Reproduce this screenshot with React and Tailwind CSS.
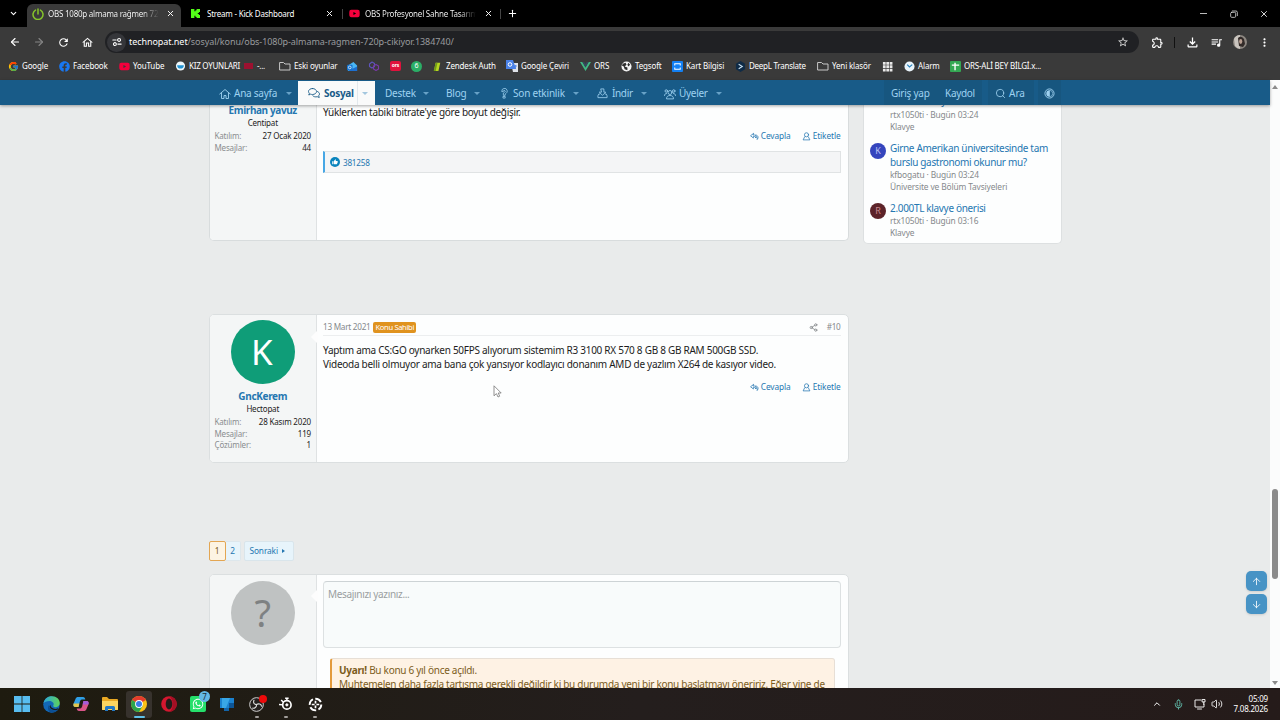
import React from "react";
import {
  ArrowDown,
  ArrowLeft,
  ArrowRight,
  ArrowUp,
  ChevronDown,
  ChevronUp,
  Mic,
  Plus,
  Search,
  Share2,
  Volume2,
  X,
} from "lucide-react";
import { FcGoogle } from "react-icons/fc";
import { FaFacebook, FaWhatsapp, FaYoutube } from "react-icons/fa";
import {
  MdMoreVert,
  MdOutlineExtension,
  MdOutlineFileDownload,
  MdOutlineHome,
  MdOutlineQueueMusic,
  MdRefresh,
  MdStarBorder,
  MdThumbUp,
} from "react-icons/md";

function Line({ children, className = "h-[11px] w-[11px]", width = 1.6, box = "0 0 24 24" }) {
  return (
    <svg
      viewBox={box}
      className={`shrink-0 ${className}`}
      fill="none"
      stroke="currentColor"
      strokeWidth={width}
      strokeLinecap="round"
      strokeLinejoin="round"
    >
      {children}
    </svg>
  );
}

function PowerIcon() {
  return (
    <Line className="h-[12px] w-[12px] text-[#86c52b]" width={3}>
      <path d="M7 4.2a10 10 0 1 0 10 0M12 2v10" />
    </Line>
  );
}

function KickIcon() {
  return (
    <svg viewBox="0 0 12 12" className="h-[9px] w-[9px] shrink-0" fill="#53fc18">
      <path d="M0 0h4.500v3H6V1.500h1.500V0H12v4h-1.500v1.300H9v1.400h1.500V8H12v4H7.500v-1.500H6V9H4.500v3H0z" />
    </svg>
  );
}

function FolderIcon() {
  return (
    <Line className="h-[12px] w-[12px] text-[#c7c7c7]" width={2}>
      <path d="M2 5h7l3 3h10v12H2z" />
    </Line>
  );
}

function Tab({ icon, title, className, titleClass, fade }) {
  return (
    <div className={`flex h-full items-center ${className}`}>
      <span className="flex w-[16px] shrink-0 items-center">{icon}</span>
      <span
        className={`w-[111px] overflow-hidden whitespace-nowrap ${titleClass} ${
          fade ? "bg-gradient-to-r from-white from-85% to-transparent bg-clip-text text-transparent" : ""
        }`}
      >
        {title}
      </span>
      <X className="ml-auto h-[9px] w-[9px]" strokeWidth={2.5} />
    </div>
  );
}

function TabStrip() {
  return (
    <div className="flex h-[27px] shrink-0 items-end bg-black text-[8px] text-white">
      <div className="flex h-full w-[27px] items-center justify-center">
        <ChevronDown className="h-[9px] w-[9px]" strokeWidth={3} />
      </div>
      <div className="flex h-[23px] w-[154px] items-center rounded-t-[6px] bg-[#3a3a3a] pr-[6px] pb-[4px] pl-[5px]">
        <Tab icon={<PowerIcon />} title="OBS 1080p almama rağmen 720p" className="w-full" titleClass="tracking-[-0.24px]" fade />
      </div>
      <Tab
        icon={<KickIcon />}
        title="Stream - Kick Dashboard"
        className="w-[161px] pr-[8px] pl-[10px]"
        titleClass="tracking-[-0.22px]"
      />
      <span className="mb-[8px] h-[10px] w-px bg-[#444]" />
      <Tab
        icon={<FaYoutube className="h-[11px] w-[11px] text-[#f5003c]" />}
        title="OBS Profesyonel Sahne Tasarımı"
        className="w-[157px] pr-[7px] pl-[6px]"
        titleClass="tracking-[-0.22px]"
        fade
      />
      <span className="mb-[8px] h-[10px] w-px bg-[#444]" />
      <div className="flex h-full w-[23px] items-center justify-center">
        <Plus className="h-[11px] w-[11px]" strokeWidth={2.2} />
      </div>
      <div className="ml-auto flex h-full w-[77px] items-center justify-between pr-[11px]">
        <span className="ml-[-3px] h-px w-[7px] bg-[#bbb]" />
        <Line className="ml-[2px] h-[8px] w-[8px] text-[#ddd]" width={2.4}>
          <rect x="2" y="7" width="15" height="15" rx="3" />
          <path d="M7 3h11a4 4 0 0 1 4 4v10" />
        </Line>
        <X className="h-[10px] w-[10px]" strokeWidth={2} />
      </div>
    </div>
  );
}

function Toolbar() {
  return (
    <div className="flex h-[28px] shrink-0 items-center bg-[#3a3a3a] pt-[2px] text-white">
      <div className="flex w-[105px] items-center pl-[9px]">
        <ArrowLeft className="mr-[12px] h-[12px] w-[12px]" strokeWidth={2.3} />
        <ArrowRight className="mr-[12px] h-[12px] w-[12px] text-[#858585]" strokeWidth={2.2} />
        <MdRefresh className="mr-[11px] h-[13px] w-[13px]" />
        <MdOutlineHome className="h-[13px] w-[13px]" />
      </div>
      <div className="flex h-[22px] w-[1034px] items-center rounded-full bg-[#202124] pl-[2px]">
        <span className="flex h-[19px] w-[19px] items-center justify-center rounded-full bg-[#35363a]">
          <Line className="h-[10px] w-[10px]" width={2.6}>
            <path d="M2 7h8M14 17h8" />
            <circle cx="17" cy="7" r="3.500" />
            <circle cx="7" cy="17" r="3.500" />
          </Line>
        </span>
        <span className="ml-[3px] whitespace-nowrap text-[9px] tracking-[-0.06px] text-[#999b9e]">
          <span className="text-white">technopat.net</span>
          /sosyal/konu/obs-1080p-almama-ragmen-720p-cikiyor.1384740/
        </span>
        <MdStarBorder className="mr-[10px] ml-auto h-[12px] w-[12px] text-[#d5d5d5]" />
      </div>
      <div className="flex flex-1 items-center">
        <MdOutlineExtension className="ml-[12px] h-[13px] w-[13px]" />
        <span className="ml-[10px] h-[11px] w-px bg-[#111]" />
        <MdOutlineFileDownload className="ml-[10px] h-[15px] w-[15px]" />
        <MdOutlineQueueMusic className="ml-[10px] h-[13px] w-[13px]" />
        <svg viewBox="0 0 14 14" className="ml-[10px] h-[14px] w-[14px]">
          <circle cx="7" cy="7" r="7" fill="#8d8781" />
          <path d="M1 4a7 7 0 0 1 6-4v14a7 7 0 0 1-5-3z" fill="#c9c4be" />
          <path d="M5 3q3-3 6 1l1 5-2 3-4-1z" fill="#322b29" />
          <ellipse cx="7.700" cy="6.500" rx="1.600" ry="2.400" fill="#b99f91" />
        </svg>
        <MdMoreVert className="ml-[11px] h-[13px] w-[13px]" />
      </div>
    </div>
  );
}

const bookmarks = [
  { className: "w-[51px]", icon: <FcGoogle className="h-[11px] w-[11px]" />, label: "Google" },
  { className: "w-[60px]", icon: <FaFacebook className="h-[11px] w-[11px] text-[#1877f2]" />, label: "Facebook" },
  { className: "w-[56px]", icon: <FaYoutube className="h-[11px] w-[11px] text-[#f5003c]" />, label: "YouTube" },
  {
    className: "w-[104px] tracking-[-0.25px]",
    icon: (
      <svg viewBox="0 0 12 12" className="h-[10px] w-[11px]">
        <circle cx="6" cy="6" r="5.500" fill="#eef7fb" />
        <path d="M2 5h8q0 4-4 4T2 5z" fill="#2193d4" />
      </svg>
    ),
    label: (
      <>
        KIZ OYUNLARI
        <span className="mr-[4px] ml-[4px] h-[6px] w-[9px] bg-[#9c1130]" />
        -...
      </>
    ),
  },
  { className: "w-[68px]", icon: <FolderIcon />, label: "Eski oyunlar" },
  {
    className: "w-[21px]",
    icon: (
      <svg viewBox="0 0 12 12" className="h-[11px] w-[11px]">
        <path d="M1 5l6-4 4 4v6H1z" fill="#49b6f5" />
        <path d="M1 11l10-5v5z" fill="#1d6fd0" />
        <rect x="0" y="4" width="6" height="6" rx="1" fill="#1473d0" />
        <circle cx="3" cy="7" r="1.500" fill="none" stroke="#fff" strokeWidth=".8" />
      </svg>
    ),
  },
  {
    className: "w-[22px]",
    icon: (
      <Line className="h-[12px] w-[12px]" width={2.2}>
        <path d="M3 8l5-4 5 3v6l-5 3-5-3z" stroke="#5f55bd" />
        <path d="M11 12l5-3 5 3v6l-5 3-5-3z" stroke="#7a3aa8" />
      </Line>
    ),
  },
  {
    className: "w-[21px]",
    icon: (
      <span className="flex h-[10px] w-[11px] items-center justify-center rounded-[2px] bg-[#e0123c] text-[5px] font-bold text-white">
        ors
      </span>
    ),
  },
  {
    className: "w-[21px]",
    icon: (
      <span className="flex h-[11px] w-[11px] items-center justify-center rounded-full bg-[#2bae66] text-[7px] text-white">
        6
      </span>
    ),
  },
  {
    className: "w-[74px]",
    icon: (
      <svg viewBox="0 0 12 12" className="h-[11px] w-[11px]">
        <path d="M4 2h5L7 11H2z" fill="#b5d421" />
        <path d="M4 2h2L4 11H2z" fill="#6f9a19" />
      </svg>
    ),
    label: "Zendesk Auth",
  },
  {
    className: "w-[74px]",
    icon: (
      <svg viewBox="0 0 12 12" className="h-[12px] w-[12px]">
        <path d="M5 3h7v9H7z" fill="#dfe3ea" />
        <path d="M0 0h7l3 9H0z" fill="#4a82e8" />
        <circle cx="4" cy="4.500" r="1.800" fill="none" stroke="#fff" />
        <path d="M8 6h3M9.500 5v4" stroke="#4a82e8" strokeWidth=".8" />
      </svg>
    ),
    label: "Google Çeviri",
  },
  {
    className: "w-[41px]",
    icon: (
      <svg viewBox="0 0 12 12" className="h-[11px] w-[11px]">
        <path d="M0 1h2.600L6 7l3.400-6H12L6 11z" fill="#41b883" />
        <path d="M2.600 1h2L6 3.400 7.400 1h2L6 7z" fill="#35495e" />
      </svg>
    ),
    label: "ORS",
  },
  {
    className: "w-[51px]",
    icon: (
      <svg viewBox="0 0 12 12" className="h-[11px] w-[11px]">
        <circle cx="6" cy="6" r="5.500" fill="#f4f4f4" />
        <path d="M2 3l3-1 1 2-2 2 3 1v3L4 9 3 6 1 5zM8 2l2 2-2 2-1-2z" fill="#2d2d2d" />
      </svg>
    ),
    label: "Tegsoft",
  },
  {
    className: "w-[63px]",
    icon: (
      <svg viewBox="0 0 12 12" className="h-[11px] w-[11px]">
        <rect width="12" height="12" rx="1" fill="#1380f3" />
        <path d="M3 5V3h6v2M3 7v2h6V7" fill="none" stroke="#fff" strokeWidth="1.100" />
      </svg>
    ),
    label: "Kart Bilgisi",
  },
  {
    className: "w-[82px] tracking-[-0.25px]",
    icon: (
      <svg viewBox="0 0 12 12" className="h-[11px] w-[11px]">
        <path d="M6 0l5 3v6l-5 3-5-3V3z" fill="#0f2b46" />
        <path d="M4 3.500l4 2.500-4 2.500" fill="none" stroke="#cfe6f7" strokeWidth="1.100" />
      </svg>
    ),
    label: "DeepL Translate",
  },
  { className: "w-[65px]", icon: <FolderIcon />, label: "Yeni klasör" },
  {
    className: "w-[22px]",
    icon: (
      <svg viewBox="0 0 12 12" className="h-[11px] w-[11px]" fill="#e8e8e8">
        <path d="M1 1h3v3H1zM4.700 1h3v3h-3zM8.400 1h3v3h-3zM1 4.700h3v3H1zM4.700 4.700h3v3h-3zM8.400 4.700h3v3h-3zM1 8.400h3v3H1zM4.700 8.400h3v3h-3zM8.400 8.400h3v3h-3z" />
      </svg>
    ),
  },
  {
    className: "w-[46px]",
    icon: (
      <svg viewBox="0 0 12 12" className="h-[11px] w-[11px]">
        <circle cx="6" cy="6" r="5.500" fill="#e9f4fb" />
        <path d="M3.500 4L6 6.500 9 4" fill="none" stroke="#2580bd" strokeWidth="1.300" />
      </svg>
    ),
    label: "Alarm",
  },
  {
    className: "w-[100px] tracking-[-0.22px]",
    icon: (
      <svg viewBox="0 0 12 12" className="h-[11px] w-[11px]">
        <rect width="12" height="12" rx="1" fill="#34a853" />
        <path d="M2 4.500h8M5.500 2v8" stroke="#fff" strokeWidth="1.500" />
      </svg>
    ),
    label: "ORS-ALİ BEY BİLGİ.x...",
  },
];

function BookmarksBar() {
  return (
    <div className="flex h-[25px] shrink-0 items-center bg-[#3a3a3a] pb-[3px] pl-[8px] text-[8px] tracking-[-0.15px] text-white">
      {bookmarks.map((item, index) => (
        <div key={index} className={`flex shrink-0 items-center whitespace-nowrap ${item.className}`}>
          <span className="mr-[3px] flex shrink-0">{item.icon}</span>
          {item.label}
        </div>
      ))}
    </div>
  );
}

function Caret() {
  return <span className="ml-auto border-x-[3px] border-t-[3px] border-x-transparent border-t-current opacity-60" />;
}

function SiteNav() {
  return (
    <div className="relative z-10 flex h-[25px] shrink-0 items-center bg-[#185b88] pl-[219px] text-[10px] whitespace-nowrap text-[#9fd2f1] shadow-[0_1px_3px_rgba(0,0,0,0.35)]">
      <div className="flex w-[79px] items-center pt-[2px] pr-[6px] tracking-[-0.25px]">
        <Line className="mr-[3px] h-[12px] w-[12px]" width={1.8}>
          <path d="M1.500 12L12 3l10.500 9M5 10v11h5v-6h4v6h5V10" />
        </Line>
        Ana sayfa
        <Caret />
      </div>
      <div className="flex h-[24px] w-[77px] items-center self-end bg-[#f9fafa] pl-[10px] font-bold tracking-[-0.3px] text-[#185b88]">
        <Line className="mr-[4px] h-[12px] w-[12px]" width={1.8}>
          <path d="M9 3c4.500 0 8 2.600 8 6s-3.500 6-8 6c-1.400 0-2.600-.2-3.700-.7L1.500 16l1.300-3.500C1.700 11.500 1 10.300 1 9c0-3.400 3.500-6 8-6zM19 9c2.300 1 4 2.800 4 5 0 1.300-.6 2.400-1.600 3.400L22.500 21l-4-1.600c-3.600 1-7.200.2-9-2" />
        </Line>
        Sosyal
        <span className="ml-auto flex h-[24px] w-[18px] items-center border-l border-[#e2e8ec] pr-[7px] text-[#69a5cd]">
          <Caret />
        </span>
      </div>
      <div className="flex w-[62px] items-center pt-[2px] pr-[8px] pl-[10px] tracking-[-0.25px]">
        Destek
        <Caret />
      </div>
      <div className="flex w-[54px] items-center pt-[2px] pr-[11px] pl-[9px] tracking-[-0.2px]">
        Blog
        <Caret />
      </div>
      <div className="flex w-[97px] items-center pt-[2px] pr-[9px] pl-[8px] tracking-[-0.2px]">
        <Line className="mr-[3px] h-[11px] w-[11px]" width={1.7}>
          <path d="M6 7a6 6 0 1 1 9 5l-1.500 1v3h-4v-5l3-2a2 2 0 1 0-3-2zM9.500 18.500h4V22h-4z" />
        </Line>
        Son etkinlik
        <Caret />
      </div>
      <div className="flex w-[67px] items-center pt-[2px] pr-[8px] pl-[9px] tracking-[-0.35px]">
        <Line className="mr-[4px] h-[11px] w-[11px]" width={1.8}>
          <path d="M9 2h6v7h4l-7 7-7-7h4zM6 13H4l-2 4v4h20v-4l-2-4h-2" />
        </Line>
        İndir
        <Caret />
      </div>
      <div className="flex w-[75px] items-center pt-[2px] pr-[8px] pl-[9px] tracking-[-0.3px]">
        <Line className="mr-[3px] h-[12px] w-[12px]" width={1.7}>
          <circle cx="12" cy="9" r="4" />
          <circle cx="4.500" cy="6" r="2.500" />
          <circle cx="19.500" cy="6" r="2.500" />
          <path d="M5 21c0-4 3-6 7-6s7 2 7 6zM1 15c0-2.500 1.500-4 4-4M23 15c0-2.500-1.500-4-4-4" />
        </Line>
        Üyeler
        <Caret />
      </div>
      <div className="ml-[154px] flex h-full w-[98px] items-center bg-[#17567f] pt-[2px] pl-[7px]">
        <span className="w-[54px] tracking-[-0.25px]">Giriş yap</span>
        <span className="tracking-[-0.3px]">Kaydol</span>
      </div>
      <div className="ml-[6px] flex h-full w-[46px] items-center bg-[#17567f] pt-[2px] pl-[7px]">
        <Search className="mr-[3px] h-[11px] w-[11px]" strokeWidth={1.8} />
        Ara
      </div>
      <div className="ml-[4px] flex h-full w-[23px] items-center justify-center bg-[#17567f] pt-[1px]">
        <svg viewBox="0 0 12 12" className="h-[11px] w-[11px]">
          <circle cx="6" cy="6" r="5" fill="none" stroke="currentColor" />
          <path d="M6 2.500v7a3.500 3.500 0 0 1 0-7z" fill="currentColor" />
          <path d="M6 2.500a3.500 3.500 0 0 1 0 7z" fill="none" stroke="currentColor" strokeWidth=".7" />
        </svg>
      </div>
    </div>
  );
}

function PostActions({ className }) {
  return (
    <div className={`flex items-center justify-end text-[8.300px] leading-[12px] tracking-[-0.1px] text-[#2577b1] ${className}`}>
      <Line className="mr-[2px] h-[9px] w-[9px]" width={2}>
        <path d="M9 4L1.500 10 9 16v-4h3c3 0 3.500 2 2.500 4 4-3 1.500-8-2.500-8H9zM15 8c6 0 9 6 4 12 1-4 0-6-2-7" />
      </Line>
      Cevapla
      <Line className="mr-[2px] ml-[11px] h-[9px] w-[9px]" width={2}>
        <circle cx="12" cy="7.500" r="5.500" />
        <path d="M7 13l-4 8h18l-4-8" />
      </Line>
      Etiketle
    </div>
  );
}

function UserCell({ children }) {
  return (
    <div className="flex w-[107.500px] shrink-0 flex-col items-center border-r border-[#dfe2e3] bg-[#f4f6f6]">
      {children}
    </div>
  );
}

function UserStats({ rows, className }) {
  return (
    <dl className={`w-full pr-[5px] pl-[5px] text-[8px] leading-[11.500px] ${className}`}>
      {rows.map(([label, value]) => (
        <div key={label} className="flex justify-between tracking-[-0.17px] whitespace-nowrap">
          <dt className="text-[#8a8d8f]">{label}</dt>
          <dd className="text-[#1c1c1c]">{value}</dd>
        </div>
      ))}
    </dl>
  );
}

function Notch({ className }) {
  return (
    <span
      className={`absolute left-[101px] border-y-[7px] border-r-[7px] border-y-transparent border-r-[#fdfdfd] ${className}`}
    />
  );
}

function SideThread({ avatar, title, meta, forum, className }) {
  return (
    <div className={`flex ${className}`}>
      <div className="w-[20px] shrink-0 pt-[2px]">{avatar}</div>
      <div className="whitespace-nowrap">
        <div className="text-[10px] leading-[14px] tracking-[-0.33px] text-[#2577b1]">{title}</div>
        <div className="text-[8.400px] leading-[12px] tracking-[-0.14px] text-[#85898c]">{meta}</div>
        <div className="text-[8.400px] leading-[12px] tracking-[-0.14px] text-[#85898c]">{forum}</div>
      </div>
    </div>
  );
}

function Forum() {
  return (
    <div className="relative flex min-h-0 flex-1 overflow-hidden bg-[#e9ebeb] pl-[208.500px]">
      <main className="w-[640px] shrink-0 text-[#1c1c1c]">
        <article className="flex h-[136px] overflow-hidden rounded-b-[5px] border border-t-0 border-[#d8dcdd] bg-[#fdfefe]">
          <UserCell>
            <div className="mt-[-2px] text-[10px] leading-[14px] font-bold tracking-[-0.38px] text-[#2577b1]">
              Emirhan yavuz
            </div>
            <div className="text-[8px] leading-[12px] tracking-[-0.2px]">Centipat</div>
            <UserStats
              className="mt-[1px]"
              rows={[
                ["Katılım:", "27 Ocak 2020"],
                ["Mesajlar:", "44"],
              ]}
            />
          </UserCell>
          <div className="min-w-0 flex-1 pr-[7px] pl-[6px]">
            <p className="text-[10px] leading-[14px] tracking-[-0.29px]">
              Yüklerken tabiki bitrate'ye göre boyut değişir.
            </p>
            <PostActions className="mt-[11px]" />
            <div className="mt-[9px] flex h-[22px] items-center border border-l-2 border-[#e0e3e4] border-l-[#47a7e5] bg-[#f4f5f6] pl-[5px] text-[8.200px] text-[#2577b1]">
              <span className="mr-[3px] flex h-[10px] w-[10px] items-center justify-center rounded-full bg-[#0a84bd] text-white">
                <MdThumbUp className="h-[6px] w-[6px]" />
              </span>
              <span className="pt-[2px] tracking-[-0.25px]">381258</span>
            </div>
          </div>
        </article>

        <article className="relative mt-[73px] flex h-[149px] overflow-hidden rounded-[5px] border border-[#dbdfe0] bg-[#fdfefe]">
          <UserCell>
            <div className="mt-[5px] flex h-[64px] w-[64px] shrink-0 items-center justify-center rounded-full bg-[#0f9d78] pr-[2px] text-[35px] text-white">
              K
            </div>
            <div className="mt-[5px] text-[10px] leading-[14px] font-bold tracking-[-0.33px] text-[#2577b1]">
              GncKerem
            </div>
            <div className="text-[8px] leading-[12px] tracking-[-0.2px]">Hectopat</div>
            <UserStats
              className="mt-[1px]"
              rows={[
                ["Katılım:", "28 Kasım 2020"],
                ["Mesajlar:", "119"],
                ["Çözümler:", "1"],
              ]}
            />
          </UserCell>
          <Notch className="top-[15px]" />
          <div className="min-w-0 flex-1 pr-[7px] pl-[6px]">
            <header className="flex h-[21px] items-center border-b border-[#eceeef] pt-[5px] text-[8.200px] tracking-[-0.27px] text-[#85898c]">
              13 Mart 2021
              <span className="ml-[3px] rounded-[2px] bg-[#e0931f] px-[2px] text-[7.600px] leading-[11px] tracking-[-0.35px] text-white">
                Konu Sahibi
              </span>
              <Share2 className="mr-[9px] ml-auto h-[9px] w-[9px]" strokeWidth={2.2} />
              #10
            </header>
            <p className="mt-[7px] text-[10px] leading-[14px] tracking-[-0.275px] whitespace-nowrap">
              Yaptım ama CS:GO oynarken 50FPS alıyorum sistemim R3 3100 RX 570 8 GB 8 GB RAM 500GB SSD.
              <br />
              Videoda belli olmuyor ama bana çok yansıyor kodlayıcı donanım AMD de yazlım X264 de kasıyor video.
            </p>
            <PostActions className="mt-[10px]" />
          </div>
        </article>

        <nav className="mt-[78px] flex h-[20px] text-[8.300px] text-[#2577b1]">
          <span className="flex w-[17px] items-center justify-center rounded-[2px] border border-[#e3a653] bg-[#fdf4e3] text-[#7a5a1c]">
            1
          </span>
          <span className="flex w-[15px] items-center justify-center rounded-r-[2px] border border-l-0 border-[#dde7ec] bg-[#e7f4fb]">
            2
          </span>
          <span className="ml-[3px] flex w-[50px] items-center rounded-[2px] border border-[#d9e5eb] bg-[#e7f4fb] pl-[5px] tracking-[-0.1px]">
            Sonraki
            <span className="ml-[4px] border-y-[2px] border-l-[3px] border-y-transparent border-l-current" />
          </span>
        </nav>

        <section className="relative mt-[13px] flex h-[150px] overflow-hidden rounded-t-[5px] border border-[#dbdfe0] bg-[#fdfefe]">
          <UserCell>
            <div className="mt-[6px] flex h-[64px] w-[64px] shrink-0 items-center justify-center rounded-full bg-[#bfc2c2] pb-[2px] text-[38px] text-[#7e8182]">
              ?
            </div>
          </UserCell>
          <Notch className="top-[14px]" />
          <div className="min-w-0 flex-1 pt-[6px] pr-[7px] pl-[6px]">
            <div className="h-[67px] rounded-[4px] border border-[#dde1e2] border-t-[#cdd3d5] bg-[#f8fbfb] pt-[5px] pl-[4px] text-[10px] leading-[14px] tracking-[-0.33px] text-[#9a9ea0]">
              Mesajınızı yazınız...
            </div>
            <div className="mt-[10px] mr-[6px] ml-[7px] h-[80px] overflow-hidden rounded-[3px] border border-l-2 border-[#e7dfd6] border-l-[#e39a3c] bg-[#fef2e4] pt-[4px] pl-[7px] text-[10px] leading-[14px] tracking-[-0.285px] whitespace-nowrap text-[#7c5d1c]">
              <b>Uyarı!</b> Bu konu 6 yıl önce açıldı.
              <br />
              Muhtemelen daha fazla tartışma gerekli değildir ki bu durumda yeni bir konu başlatmayı öneririz. Eğer yine de
            </div>
          </div>
        </section>
      </main>

      <aside className="ml-[14px] h-[139px] w-[199px] shrink-0 overflow-hidden rounded-b-[5px] border border-t-0 border-[#dde0e1] bg-[#fdfefe] pl-[6.500px]">
        <div className="ml-[20px] text-[8.400px] leading-[12px] tracking-[-0.14px] text-[#85898c]">
          <div className="mt-[-12px] mb-[2px] text-[10px] leading-[14px] tracking-[-0.33px] text-[#2577b1]">
            1500TL klavye
          </div>
          <div>rtx1050ti · Bugün 03:24</div>
          <div>Klavye</div>
        </div>
        <SideThread
          className="mt-[8px]"
          avatar={
            <span className="flex h-[16px] w-[16px] items-center justify-center rounded-full bg-[#3545bd] text-[9px] text-[#b9c1f4]">
              K
            </span>
          }
          title={
            <>
              Girne Amerikan üniversitesinde tam
              <br />
              burslu gastronomi okunur mu?
            </>
          }
          meta="kfbogatu · Bugün 03:24"
          forum="Üniversite ve Bölüm Tavsiyeleri"
        />
        <SideThread
          className="mt-[8px]"
          avatar={
            <span className="flex h-[16px] w-[16px] items-center justify-center rounded-full bg-[#5c2329] text-[9px] text-[#c98b8f]">
              R
            </span>
          }
          title="2.000TL klavye önerisi"
          meta="rtx1050ti · Bugün 03:16"
          forum="Klavye"
        />
      </aside>

      <div className="absolute right-[3px] bottom-[74px] flex flex-col gap-[3px]">
        <span className="flex h-[20px] w-[21px] items-center justify-center rounded-[5px] bg-[#4793c5] text-white shadow-sm">
          <ArrowUp className="h-[11px] w-[11px]" strokeWidth={1.8} />
        </span>
        <span className="flex h-[20px] w-[21px] items-center justify-center rounded-[5px] bg-[#4793c5] text-white shadow-sm">
          <ArrowDown className="h-[11px] w-[11px]" strokeWidth={1.8} />
        </span>
      </div>

      {/* mouse pointer */}
      <svg viewBox="0 0 9 13" className="absolute top-[280px] left-[493px] h-[13px] w-[9px]">
        <path
          d="M1 .8v10l2.400-2.200L5 12l1.700-.8-1.500-3.200h3z"
          fill="#fff"
          stroke="#777"
          strokeWidth=".8"
        />
      </svg>
    </div>
  );
}

function Scrollbar() {
  return (
    <div className="flex w-[10px] shrink-0 flex-col items-center bg-[#fbfcfc] pt-[5px] pb-[3px]">
      <span className="border-x-[3px] border-b-[4px] border-x-transparent border-b-[#8b8b8b]" />
      <span className="mt-[400px] h-[90px] w-[6px] rounded-full bg-[#8b8b8b]" />
      <span className="mt-auto border-x-[3px] border-t-[4px] border-x-transparent border-t-[#8b8b8b]" />
    </div>
  );
}

const apps = [
  {
    name: "start",
    icon: (
      <svg viewBox="0 0 16 16" className="h-[16px] w-[16px]" fill="#58bdf0">
        <path d="M0 0h7.600v7.600H0zM8.400 0H16v7.600H8.400zM0 8.400h7.600V16H0zM8.400 8.400H16V16H8.400z" />
      </svg>
    ),
  },
  {
    name: "edge",
    icon: (
      <svg viewBox="0 0 16 16" className="h-[17px] w-[17px]">
        <defs>
          <linearGradient id="edgeTop" x1="0" x2="1">
            <stop offset="0" stopColor="#2aa5dc" />
            <stop offset="1" stopColor="#5fd35a" />
          </linearGradient>
        </defs>
        <circle cx="8" cy="8" r="7.800" fill="#1368b5" />
        <path d="M.3 7C1.500 2.500 4.500.2 8.300.2c4.500 0 7.500 3 7.500 6.300 0 2.500-2 4-4.300 4-1.500 0-2.300-.7-1.800-1.500C11 7 9 4.700 6 4.700 3.500 4.700 1.300 5.500.3 7z" fill="url(#edgeTop)" />
        <path d="M5.500 8.500c0 3 2.500 5 5.500 5 1.200 0 2.400-.3 3.500-1-1.500 2.200-4 3.300-6.500 3.300C4.500 15 4 11 5.500 8.500z" fill="#0c4f94" />
        <path d="M7 8.500c0 2 2 3.700 4.500 3.700 1.200 0 2-.3 3-.8l-.6 1.200c-3 1.400-7.500 0-7.700-3.300z" fill="#1c1b16" />
      </svg>
    ),
  },
  {
    name: "copilot",
    icon: (
      <svg viewBox="0 0 16 16" className="h-[16px] w-[16px]">
        <path d="M5 1h5c1.500 0 2 1 2.300 2.500H9C7.500 3.500 7 5 6.500 7L5.500 11H2.500C.5 11 0 9.500.6 7.500L2.500 3C3 1.600 4 1 5 1z" fill="#2f9fe6" />
        <path d="M.6 7.500h5.700L5.500 11H2.500C.5 11 0 9.500.6 7.500z" fill="#e5c64b" />
        <path d="M11 15H6c-1.500 0-2-1-2.300-2.500H7c1.500 0 2-1.500 2.500-3.500l1-4h3c2 0 2.500 1.500 1.900 3.500L13.500 13c-.5 1.400-1.500 2-2.500 2z" fill="#d95587" />
        <path d="M10.500 5h3c2 0 2.500 1.500 1.900 3.500H9.600z" fill="#a45bd8" />
      </svg>
    ),
  },
  {
    name: "explorer",
    icon: (
      <svg viewBox="0 0 16 14" className="h-[14px] w-[16px]">
        <path d="M0 1q0-1 1-1h4l2 2h8q1 0 1 1v10H0z" fill="#e9a823" />
        <path d="M0 4h16v8q0 1-1 1H1q-1 0-1-1z" fill="#fcd560" />
        <path d="M3 14v-3.500Q3 9 4.500 9h7q1.500 0 1.500 1.500V14h-3v-2H6v2z" fill="#2379c4" />
      </svg>
    ),
  },
  {
    name: "chrome",
    active: true,
    icon: (
      <svg viewBox="0 0 16 16" className="h-[16px] w-[16px]">
        <circle cx="8" cy="8" r="8" fill="#fbc116" />
        <path d="M8 8L1.100 4A8 8 0 0 1 14.900 4z" fill="#e33b2e" />
        <path d="M8 8L1.100 4A8 8 0 0 0 8 16l4-6.500z" fill="#2da44e" />
        <circle cx="8" cy="8" r="3.900" fill="#fff" />
        <circle cx="8" cy="8" r="3" fill="#3a7de8" />
      </svg>
    ),
  },
  {
    name: "opera",
    icon: (
      <svg viewBox="0 0 16 16" className="h-[16px] w-[16px]">
        <circle cx="8" cy="8" r="7.800" fill="#d3172f" />
        <path d="M8 .2a7.800 7.800 0 0 1 0 15.600c5-2 5-13 0-15.600z" fill="#a50f24" />
        <ellipse cx="8" cy="8" rx="3.300" ry="5.400" fill="#201c1a" />
      </svg>
    ),
  },
  {
    name: "whatsapp",
    icon: (
      <span className="relative flex h-[16px] w-[16px] items-center justify-center rounded-[2px] bg-[#25e06b] text-white">
        <FaWhatsapp className="h-[12px] w-[12px]" />
        <span className="absolute top-[-5px] right-[-4px] flex h-[11px] w-[11px] items-center justify-center rounded-full bg-[#62b8e6] text-[8px] text-[#1b2a33]">
          7
        </span>
      </span>
    ),
  },
  {
    name: "devices",
    icon: (
      <svg viewBox="0 0 16 16" className="h-[16px] w-[16px]">
        <rect x="1" y="2" width="14" height="10" fill="#1b82cf" />
        <path d="M3 2h8l-4 10H3z" fill="#39a7e6" />
        <path d="M5 12h5v3H5z" fill="#1264a8" />
        <path d="M10 7h5v5h-5z" fill="#0d5596" />
      </svg>
    ),
  },
  {
    name: "obs",
    running: true,
    icon: (
      <span className="relative">
        <svg viewBox="0 0 16 16" className="h-[15px] w-[15px]">
          <circle cx="8" cy="8" r="7.300" fill="#25201f" stroke="#dcdcdc" strokeWidth="1" />
          <path
            d="M5.500 3c-1.500 3 0 5 2.500 5M8 8c2.300-1.500 5-.5 5.500 2.200M8 8c.3 2.800-2 4.500-4.500 3.800"
            fill="none"
            stroke="#dcdcdc"
            strokeWidth="1.200"
          />
        </svg>
        <span className="absolute top-[-2px] right-[-3px] h-[8px] w-[8px] rounded-full bg-[#ee0a0a]" />
      </span>
    ),
  },
  {
    name: "steelseries",
    running: true,
    icon: (
      <svg viewBox="0 0 16 16" className="h-[14px] w-[14px]" fill="none" stroke="#fff">
        <circle cx="9" cy="9" r="4.800" strokeWidth="1.900" />
        <circle cx="9" cy="9" r="1.300" fill="#fff" />
        <path d="M7 1.500h4M9 1.500V4M0 8.500l4.500.5M2.500 3.500L5 6" strokeWidth="1.700" />
      </svg>
    ),
  },
  {
    name: "target",
    running: true,
    icon: (
      <svg viewBox="0 0 16 16" className="h-[15px] w-[15px]" fill="none" stroke="#fff">
        <circle cx="8" cy="8" r="6.200" strokeWidth="2" strokeDasharray="7.200 2.540" strokeDashoffset="1" />
        <path d="M8 4v3M8 9v3M4 8h3M9 8h3" strokeWidth="1.800" />
      </svg>
    ),
  },
];

function Taskbar() {
  return (
    <div className="flex h-[32px] shrink-0 items-center bg-gradient-to-r from-[#1e1b0f] via-[#241e1d] to-[#251b1a] pl-[7.500px] text-white">
      {apps.map((app) => (
        <div key={app.name} className="flex w-[29.300px] justify-center">
          <div
            className={`relative flex h-[27px] w-[26px] items-center justify-center rounded-[3px] ${
              app.active ? "bg-[#37322d]" : ""
            }`}
          >
            {app.icon}
            {app.active && <span className="absolute bottom-0 h-[2px] w-[11px] rounded-full bg-[#5fc0ea]" />}
            {app.running && <span className="absolute bottom-0 h-[2px] w-[4px] rounded-full bg-[#a39f9c]" />}
          </div>
        </div>
      ))}
      <div className="ml-auto flex items-center pr-[12px]">
        <ChevronUp className="mr-[11px] h-[10px] w-[10px]" strokeWidth={2.4} />
        <Mic className="mr-[10px] h-[11px] w-[11px] text-[#62bfae]" strokeWidth={2} />
        <Line className="mr-[5px] h-[12px] w-[12px]" width={1.8}>
          <path d="M14 4H2v14h18v-6M7 22h8M17 3h5v5h-5zM19.500 8v5" />
        </Line>
        <Volume2 className="h-[12px] w-[12px]" strokeWidth={1.7} />
        <div className="ml-[10px] text-right text-[8px] leading-[10.500px] tracking-[-0.2px]">
          05:09
          <br />
          7.08.2026
        </div>
      </div>
    </div>
  );
}

export default function App() {
  return (
    <div className="flex h-[720px] w-[1280px] flex-col overflow-hidden bg-black font-['Noto_Sans','Open_Sans',sans-serif]">
      <TabStrip />
      <Toolbar />
      <BookmarksBar />
      <div className="flex min-h-0 flex-1">
        <div className="flex min-w-0 flex-1 flex-col">
          <SiteNav />
          <Forum />
        </div>
        <Scrollbar />
      </div>
      <Taskbar />
    </div>
  );
}
